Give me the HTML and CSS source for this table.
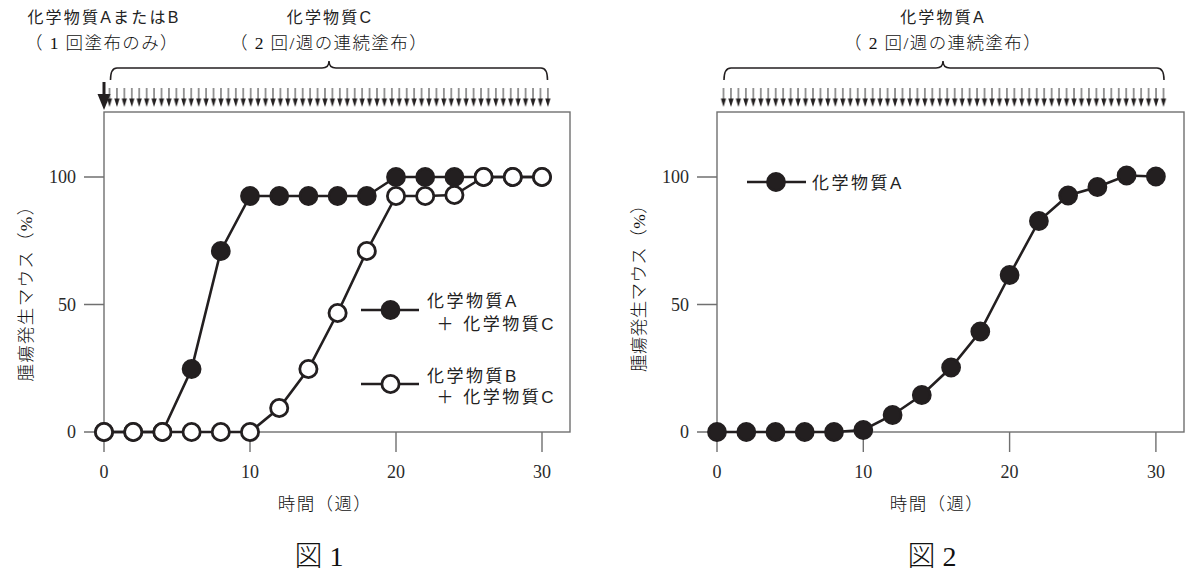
FILE: index.html
```html
<!DOCTYPE html>
<html lang="ja">
<head>
<meta charset="utf-8">
<title>図1・図2</title>
<link rel="stylesheet" href="styles.css">
</head>
<body>
<main class="page">
  <figure class="fig">
    <svg class="chart" width="600" height="537" viewBox="0 0 600 537">
      <defs>
        <pattern id="dose-l" patternUnits="userSpaceOnUse" x="105.8" y="0" width="7.43" height="120">
          <line class="dose-shaft" x1="3.715" y1="88" x2="3.715" y2="100"/>
          <polygon class="dose-head" points="1.1,98.5 6.3,98.5 3.715,107"/>
        </pattern>
      </defs>
      <!-- top labels -->
      <text class="goth" x="104" y="23" text-anchor="middle">化学物質AまたはB</text>
      <text class="minc" x="102" y="48.5" text-anchor="middle">（ 1 回塗布のみ）</text>
      <text class="goth" x="330" y="23" text-anchor="middle">化学物質C</text>
      <text class="minc" x="329" y="48.5" text-anchor="middle">（ 2 回/週の連続塗布）</text>
      <path class="brace" d="M110.5,80 Q110.5,68 117,68 L322,68 Q329,68 329,61 Q329,68 336,68 L541,68 Q547.5,68 547.5,80"/>
      <line class="big-shaft" x1="104" y1="82" x2="104" y2="97"/>
      <polygon class="dose-head" points="97.5,94 110.5,94 104,110"/>
      <rect x="105.8" y="85" width="445.8" height="24" fill="url(#dose-l)"/>
      <!-- axes -->
      <rect class="axis" x="104" y="112" width="466" height="320"/>
      <path class="axis" d="M84,177 H104 M84,304.5 H104 M84,432 H104 M104,432 V452 M250,432 V452 M396,432 V452 M542,432 V452"/>
      <text class="num" x="76" y="183" text-anchor="end">100</text>
      <text class="num" x="76" y="311" text-anchor="end">50</text>
      <text class="num" x="76" y="438" text-anchor="end">0</text>
      <text class="num" x="104" y="478" text-anchor="middle">0</text>
      <text class="num" x="250" y="478" text-anchor="middle">10</text>
      <text class="num" x="396" y="478" text-anchor="middle">20</text>
      <text class="num" x="542" y="478" text-anchor="middle">30</text>
      <text class="minc" x="325" y="509.5" text-anchor="middle">時間（週）</text>
      <text class="minc ytitle" transform="translate(31.6,289) rotate(-90)" text-anchor="middle">腫瘍発生マウス（%）</text>
      <!-- series A + C -->
      <polyline class="line" points="104,432 133.2,432 162.4,432 191.6,369 220.8,251 250,196 279.2,196 308.4,196 337.6,196 366.8,196 396,177 425.2,177 454.4,177 483.6,177 512.8,177 542,177"/>
      <g class="dot-fill">
        <circle cx="104" cy="432" r="8.6"/><circle cx="133.2" cy="432" r="8.6"/><circle cx="162.4" cy="432" r="8.6"/>
        <circle cx="191.6" cy="369" r="8.6"/><circle cx="220.8" cy="251" r="8.6"/><circle cx="250" cy="196" r="8.6"/>
        <circle cx="279.2" cy="196" r="8.6"/><circle cx="308.4" cy="196" r="8.6"/><circle cx="337.6" cy="196" r="8.6"/>
        <circle cx="366.8" cy="196" r="8.6"/><circle cx="396" cy="177" r="8.6"/><circle cx="425.2" cy="177" r="8.6"/>
        <circle cx="454.4" cy="177" r="8.6"/><circle cx="483.6" cy="177" r="8.6"/><circle cx="512.8" cy="177" r="8.6"/>
        <circle cx="542" cy="177" r="8.6"/>
      </g>
      <!-- series B + C -->
      <polyline class="line" points="104,432 133.2,432 162.4,432 191.6,432 220.8,432 250,432 279.2,408 308.4,369 337.6,313 366.8,251 396,196 425.2,196 454.4,195 483.6,177 512.8,177 542,177"/>
      <g class="dot-open">
        <circle cx="104" cy="432" r="8.6"/><circle cx="133.2" cy="432" r="8.6"/><circle cx="162.4" cy="432" r="8.6"/>
        <circle cx="191.6" cy="432" r="8.6"/><circle cx="220.8" cy="432" r="8.6"/><circle cx="250" cy="432" r="8.6"/>
        <circle cx="279.2" cy="408" r="8.6"/><circle cx="308.4" cy="369" r="8.6"/><circle cx="337.6" cy="313" r="8.6"/>
        <circle cx="366.8" cy="251" r="8.6"/><circle cx="396" cy="196" r="8.6"/><circle cx="425.2" cy="196" r="8.6"/>
        <circle cx="454.4" cy="195" r="8.6"/><circle cx="483.6" cy="177" r="8.6"/><circle cx="512.8" cy="177" r="8.6"/>
        <circle cx="542" cy="177" r="8.6"/>
      </g>
      <!-- legend -->
      <line class="line" x1="361" y1="310" x2="419" y2="310"/>
      <circle class="dot-fill" cx="390.5" cy="310" r="8.6"/>
      <text class="goth legend" x="427" y="306.5">化学物質A</text>
      <text class="goth legend" x="436.5" y="329.5">＋ 化学物質C</text>
      <line class="line" x1="361" y1="384" x2="419" y2="384"/>
      <circle class="dot-open" cx="390.5" cy="384" r="8.6"/>
      <text class="goth legend" x="427" y="381.5">化学物質B</text>
      <text class="goth legend" x="436.5" y="403">＋ 化学物質C</text>
    </svg>
    <figcaption class="cap cap-1">図 1</figcaption>
  </figure>

  <figure class="fig">
    <svg class="chart" width="600" height="537" viewBox="0 0 600 537">
      <defs>
        <pattern id="dose-r" patternUnits="userSpaceOnUse" x="119.77" y="0" width="7.458" height="120">
          <line class="dose-shaft" x1="3.729" y1="88" x2="3.729" y2="100"/>
          <polygon class="dose-head" points="1.1,98.5 6.35,98.5 3.729,107"/>
        </pattern>
      </defs>
      <text class="goth" x="343" y="23" text-anchor="middle">化学物質A</text>
      <text class="minc" x="343" y="48.5" text-anchor="middle">（ 2 回/週の連続塗布）</text>
      <path class="brace" d="M124,80 Q124,68 131,68 L336,68 Q343,68 343,61 Q343,68 350,68 L557,68 Q564,68 564,80"/>
      <rect x="119.77" y="85" width="447.5" height="24" fill="url(#dose-r)"/>
      <rect class="axis" x="117" y="112" width="467" height="320"/>
      <path class="axis" d="M97,177 H117 M97,304.5 H117 M97,432 H117 M117,432 V452 M263.3,432 V452 M409.6,432 V452 M555.9,432 V452"/>
      <text class="num" x="89" y="183" text-anchor="end">100</text>
      <text class="num" x="89" y="311" text-anchor="end">50</text>
      <text class="num" x="89" y="438" text-anchor="end">0</text>
      <text class="num" x="117" y="478" text-anchor="middle">0</text>
      <text class="num" x="263.3" y="478" text-anchor="middle">10</text>
      <text class="num" x="409.6" y="478" text-anchor="middle">20</text>
      <text class="num" x="555.9" y="478" text-anchor="middle">30</text>
      <text class="minc" x="337" y="509.5" text-anchor="middle">時間（週）</text>
      <text class="minc ytitle ytitle-2" transform="translate(45.2,284) rotate(-90)" text-anchor="middle">腫瘍発生マウス（%）</text>
      <polyline class="line" points="117,432 146.3,432 175.5,432 204.7,432 234,432 263.3,430 292.6,415 321.8,395 351.1,367.5 380.3,331.5 409.6,275 438.9,221 468.1,195.5 497.4,187 526.6,175.5 555.9,176.5"/>
      <g class="dot-fill">
        <circle cx="117" cy="432" r="8.6"/><circle cx="146.3" cy="432" r="8.6"/><circle cx="175.5" cy="432" r="8.6"/>
        <circle cx="204.7" cy="432" r="8.6"/><circle cx="234" cy="432" r="8.6"/><circle cx="263.3" cy="430" r="8.6"/>
        <circle cx="292.6" cy="415" r="8.6"/><circle cx="321.8" cy="395" r="8.6"/><circle cx="351.1" cy="367.5" r="8.6"/>
        <circle cx="380.3" cy="331.5" r="8.6"/><circle cx="409.6" cy="275" r="8.6"/><circle cx="438.9" cy="221" r="8.6"/>
        <circle cx="468.1" cy="195.5" r="8.6"/><circle cx="497.4" cy="187" r="8.6"/><circle cx="526.6" cy="175.5" r="8.6"/>
        <circle cx="555.9" cy="176.5" r="8.6"/>
      </g>
      <line class="line" x1="147" y1="182" x2="206" y2="182"/>
      <circle class="dot-fill" cx="176" cy="182" r="8.6"/>
      <text class="goth legend" x="212" y="188.5">化学物質A</text>
    </svg>
    <figcaption class="cap cap-2">図 2</figcaption>
  </figure>
</main>
</body>
</html>
```

FILE: styles.css
```css
html, body {
  margin: 0;
  padding: 0;
  background: #ffffff;
}

.page {
  display: flex;
  width: 1200px;
  height: 577px;
  overflow: hidden;
}

.fig {
  margin: 0;
  width: 600px;
  display: flex;
  flex-direction: column;
}

.chart {
  display: block;
}

.cap {
  width: 438px;
  height: 40px;
  line-height: 40px;
  text-align: center;
  font-family: "Liberation Serif", "Noto Sans CJK JP", serif;
  font-weight: 300;
  font-size: 28px;
  color: #111111;
}

.cap-1 {
  margin-left: 100px;
}

.cap-2 {
  margin-left: 113px;
}

/* chart graphics */
.axis {
  fill: none;
  stroke: #707070;
  stroke-width: 1.4;
}

.line {
  fill: none;
  stroke: #231f20;
  stroke-width: 2.6;
}

.dot-fill {
  fill: #231f20;
  stroke: #231f20;
  stroke-width: 2.6;
}

.dot-open {
  fill: #ffffff;
  stroke: #231f20;
  stroke-width: 2.8;
}

.brace {
  fill: none;
  stroke: #231f20;
  stroke-width: 1.6;
}

.big-shaft {
  stroke: #231f20;
  stroke-width: 3;
}

.dose-shaft {
  stroke: #333333;
  stroke-width: 1;
}

.dose-head {
  fill: #231f20;
}

/* chart texts */
.num {
  font-family: "Liberation Serif", serif;
  font-size: 18px;
  fill: #2a2a2a;
}

.goth {
  font-family: "Liberation Sans", "Noto Sans CJK JP", sans-serif;
  font-size: 16px;
  letter-spacing: 2.2px;
  fill: #222222;
}

.goth.legend {
  font-size: 17px;
  letter-spacing: 2.5px;
}

.minc {
  font-family: "Liberation Serif", "Noto Sans CJK JP", serif;
  font-weight: 300;
  font-size: 17.5px;
  letter-spacing: 1.4px;
  fill: #111111;
}

.ytitle {
  font-size: 17.5px;
  letter-spacing: 1.3px;
}

.ytitle-2 {
  letter-spacing: 0.4px;
}
```
